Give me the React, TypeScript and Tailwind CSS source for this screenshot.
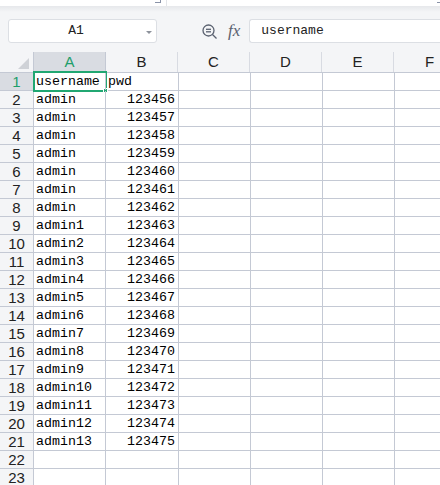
import React from "react";

const cols = ["A", "B", "C", "D", "E", "F"];
const data: [string, string][] = [
  ["username", "pwd"],
  ["admin", "123456"],
  ["admin", "123457"],
  ["admin", "123458"],
  ["admin", "123459"],
  ["admin", "123460"],
  ["admin", "123461"],
  ["admin", "123462"],
  ["admin1", "123463"],
  ["admin2", "123464"],
  ["admin3", "123465"],
  ["admin4", "123466"],
  ["admin5", "123467"],
  ["admin6", "123468"],
  ["admin7", "123469"],
  ["admin8", "123470"],
  ["admin9", "123471"],
  ["admin10", "123472"],
  ["admin11", "123473"],
  ["admin12", "123474"],
  ["admin13", "123475"],
  ["", ""],
  ["", ""],
];

const mono = { fontFamily: '"Liberation Mono", monospace' };
const sans = { fontFamily: '"Liberation Sans", "Noto Sans", sans-serif' };

export default function App() {
  return (
    <div className="w-[440px] h-[485px] overflow-hidden bg-[#f4f5f7] relative" style={sans}>
      {/* top strip */}
      <div className="h-[6px] bg-white relative">
        <div className="absolute left-[155px] top-0 w-[6px] h-[3px] border-r border-b border-[#8a93a8]" />
        <div className="absolute left-[166px] top-0 w-px h-[6px] bg-[#e3e5e9]" />
        <div className="absolute right-0 top-[2px] w-[3px] h-px bg-[#8a93a8]" />
      </div>
      <div className="h-[6px] bg-gradient-to-b from-[#e6e8eb] to-[#f4f5f7]" />
      {/* formula row */}
      <div className="h-[40px] pt-[7px] flex items-start">
        <div className="ml-[8px] w-[149px] h-[24px] bg-white border border-[#dcdfe4] rounded-[3px] flex items-center relative">
          <span className="w-[134px] text-center text-[13px] text-[#222]" style={mono}>A1</span>
          <div className="absolute right-[4px] top-[11px] w-0 h-0 border-l-[3px] border-r-[3px] border-t-[3px] border-l-transparent border-r-transparent border-t-[#8d929b]" />
        </div>
        <div className="ml-[45px] mt-[5px] w-[17px] h-[15px]">
          <svg width="17" height="15" viewBox="0 0 17 15" fill="none" stroke="#5a6170" strokeWidth="1.3">
            <circle cx="6.5" cy="6.5" r="5.5" />
            <line x1="4" y1="5.3" x2="9" y2="5.3" />
            <line x1="4" y1="7.8" x2="9" y2="7.8" />
            <line x1="10.5" y1="10.5" x2="14.5" y2="14.5" />
          </svg>
        </div>
        <div className="ml-[9px] mt-[2px] text-[17px] leading-[20px] italic text-[#5a6170]" style={{ fontFamily: '"Liberation Serif", serif' }}>fx</div>
        <div className="ml-[9px] flex-1 h-[24px] bg-white border border-[#dcdfe4] border-r-0 rounded-l-[3px] flex items-center pl-[11px]">
          <span className="text-[13px] text-[#222]" style={mono}>username</span>
        </div>
      </div>
      {/* grid */}
      <div className="bg-white">
        {/* header row */}
        <div className="flex h-[21px] bg-[#f4f5f7] border-b border-[#c4c9d4]">
          <div className="w-[34px] shrink-0 border-r border-[#c4c9d4] relative">
            <svg className="absolute right-[4px] bottom-[3px]" width="11" height="11"><polygon points="11,0 11,11 0,11" fill="#cfd2d7" /></svg>
          </div>
          {cols.map((c, i) => (
            <div
              key={c}
              className={`w-[72px] shrink-0 border-r text-center text-[15px] leading-[20px] ${
                i === 0 ? "bg-[#d9dce2] text-[#1e9e6a] border-[#c4c9d4]" : "text-[#222] border-[#d8dbe2]"
              }`}
            >
              {c}
            </div>
          ))}
        </div>
        {data.map((r, ri) => (
          <div key={ri} className="flex h-[18px] border-b border-[#c4c9d4]">
            <div
              className={`w-[34px] shrink-0 border-r border-[#c4c9d4] text-center text-[15px] leading-[17px] ${
                ri === 0 ? "bg-[#d9dce2] text-[#1e9e6a]" : "bg-[#f4f5f7] text-[#222]"
              }`}
            >
              {ri + 1}
            </div>
            <div className="w-[72px] shrink-0 border-r border-[#c4c9d4] pl-[2px] text-[13.3px] leading-[17px] text-black whitespace-nowrap relative z-10" style={mono}>
              {r[0]}
            </div>
            <div className={`w-[73px] shrink-0 border-r border-[#c4c9d4] pr-[3px] text-[13.3px] leading-[17px] text-black ${ri === 0 ? "text-left pl-[2px]" : "text-right"}`} style={mono}>
              {r[1]}
            </div>
            {[0, 1, 2, 3].map((k) => (
              <div key={k} className="w-[72px] shrink-0 border-r border-[#c4c9d4]" />
            ))}
          </div>
        ))}
      </div>
      {/* selection box */}
      <div className="absolute left-[33px] top-[71px] w-[74px] h-[21px] border-2 border-[#21a772] pointer-events-none" />
      <div className="absolute left-[103px] top-[88px] w-[5px] h-[5px] bg-[#21a772] border border-white pointer-events-none" />
    </div>
  );
}
